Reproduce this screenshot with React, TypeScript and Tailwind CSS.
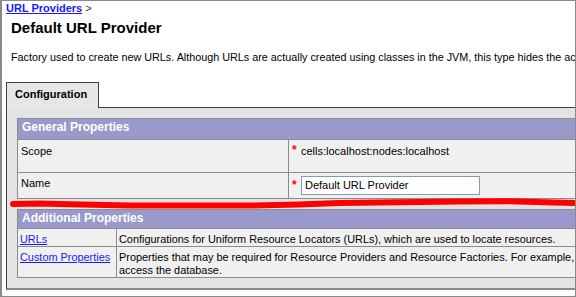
import React from "react";

const font = { fontFamily: '"Liberation Sans", Arial, sans-serif' };

const Star = () => (
  <span className="text-[#ff0000] font-bold text-[12px] leading-[12px] w-[9px] shrink-0">*</span>
);

// hand-drawn red mark between the two tables
const RedStroke = () => (
  <svg width="600" height="10" className="block overflow-visible -ml-[11px]" viewBox="7 199 600 10">
    <polyline
      points="14,204 40,203.5 70,204.3 130,205.6 255,205.6 300,204.6 340,203 460,201.6 510,201.2 555,202.6 600,203.5"
      fill="none"
      stroke="#ff0000"
      strokeWidth="6"
      strokeLinecap="round"
      strokeLinejoin="round"
    />
  </svg>
);

export default function App() {
  return (
    <div
      style={font}
      className="w-[576px] h-[297px] overflow-hidden bg-white border-t border-r border-b border-l-2 border-[#8a8a8a] text-black"
    >
      <div className="w-[900px] pl-[4px]">
        {/* Breadcrumb */}
        <div className="text-[11px] leading-[14px]">
          <a href="#" className="font-bold text-[#1a1aff] underline">
            URL Providers
          </a>{" "}
          <span className="text-[#333]">&gt;</span>
        </div>

        {/* Title */}
        <h1 className="mt-[4px] pl-[5px] text-[15px] leading-[18px] font-bold">Default URL Provider</h1>

        {/* Description */}
        <p className="mt-[13px] pl-[5px] text-[10.8px] leading-[14px] whitespace-nowrap">
          Factory used to create new URLs. Although URLs are actually created using classes in the JVM, this type
          hides the actual implementation and allows for customization.
        </p>

        {/* Tabs */}
        <div className="mt-[18px] flex">
          <div className="w-[93px] h-[26px] shrink-0 border-t border-l border-r border-[#404040] bg-[#e6e6e6] pl-[8px] pt-[4px] text-[11px] leading-[14px] font-bold">
            Configuration
          </div>
          <div className="flex-1 h-[26px] border-b border-[#404040]" />
        </div>

        {/* Panel */}
        <div className="border-l border-[#404040] border-b-2 border-b-[#8a8a8a] bg-[#e3e3e3] pl-[10px] pt-[10px] pb-[10px]">
          {/* General Properties */}
          <div className="w-[800px] border border-[#8c8c8c] bg-[#f0f0f0] text-[11px] leading-[14px]">
            <div className="h-[21px] border-b border-[#8c8c8c] bg-[#9999cc] pl-[4px] text-white font-bold text-[12px] leading-[17px]">
              General Properties
            </div>
            <div className="flex h-[33px] border-b border-[#8c8c8c]">
              <div className="w-[271px] shrink-0 border-r border-[#8c8c8c] pl-[3px] pt-[4px]">Scope</div>
              <div className="flex items-start pl-[3px] pt-[4px]">
                <Star />
                <span>cells:localhost:nodes:localhost</span>
              </div>
            </div>
            <div className="flex h-[25px]">
              <div className="w-[271px] shrink-0 border-r border-[#8c8c8c] pl-[3px] pt-[3px]">Name</div>
              <div className="flex items-center pl-[3px] pt-[3px] h-[21px]">
                <Star />
                <div className="w-[179px] h-[19px] border border-[#7f9db9] bg-white pl-[3px] text-[11px] leading-[17px]">
                  Default URL Provider
                </div>
              </div>
            </div>
          </div>

          <RedStroke />

          {/* Additional Properties */}
          <div className="w-[800px] border border-[#8c8c8c] bg-[#f0f0f0] text-[10.9px] leading-[13px]">
            <div className="h-[19px] border-b border-[#8c8c8c] bg-[#9999cc] pl-[4px] text-white font-bold text-[12px] leading-[16px]">
              Additional Properties
            </div>
            <div className="flex h-[18px] border-b border-[#8c8c8c]">
              <div className="w-[99px] shrink-0 border-r border-[#8c8c8c] pl-[2px] pt-[4px]">
                <a href="#" className="text-[#1a1aff] underline whitespace-nowrap">
                  URLs
                </a>
              </div>
              <div className="pl-[2px] pt-[4px] whitespace-nowrap">
                Configurations for Uniform Resource Locators (URLs), which are used to locate resources.
              </div>
            </div>
            <div className="flex h-[30px]">
              <div className="w-[99px] shrink-0 border-r border-[#8c8c8c] pl-[2px] pt-[4px]">
                <a href="#" className="text-[#1a1aff] underline whitespace-nowrap">
                  Custom Properties
                </a>
              </div>
              <div className="pl-[2px] pt-[4px] whitespace-nowrap">
                Properties that may be required for Resource Providers and Resource Factories. For example, most
                database vendors require additional custom properties for data sources that will
                <br />
                access the database.
              </div>
            </div>
          </div>
        </div>
      </div>
    </div>
  );
}
